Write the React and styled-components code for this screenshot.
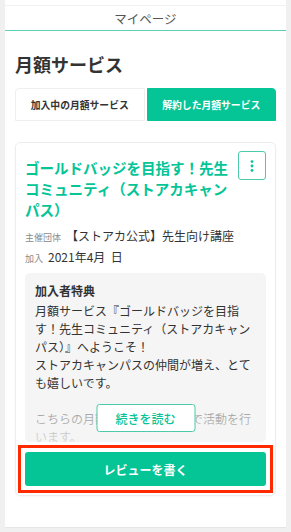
import { createGlobalStyle, styled } from 'styled-components';

const GREEN = '#05c496';

const GlobalStyle = createGlobalStyle`
  body {
    margin: 0;
    background: #f0f0f0;
    font-family: "Noto Sans CJK JP", "Noto Sans", sans-serif;
    color: #333;
  }
`;

function App() {
  return (
    <>
      <GlobalStyle />
      <Page>
        <Panel>
          <Header>マイページ</Header>
          <Content>
            <PageTitle>月額サービス</PageTitle>
            <Tabs>
              <Tab side="left">加入中の月額サービス</Tab>
              <Tab side="right" active>解約した月額サービス</Tab>
            </Tabs>

            <Card>
              <CardHead>
                <CardTitle>ゴールドバッジを目指す！先生コミュニティ（ストアカキャンパス）</CardTitle>
                <MenuButton aria-label="menu">
                  <svg width="4" height="12" viewBox="0 0 4 12">
                    <circle cx="2" cy="1.6" r="1.4" fill={GREEN} />
                    <circle cx="2" cy="6" r="1.4" fill={GREEN} />
                    <circle cx="2" cy="10.4" r="1.4" fill={GREEN} />
                  </svg>
                </MenuButton>
              </CardHead>

              <MetaList>
                <Meta>
                  <MetaLabel>主催団体</MetaLabel>
                  <MetaValue>【ストアカ公式】先生向け講座</MetaValue>
                </Meta>
                <Meta>
                  <MetaLabel>加入</MetaLabel>
                  <MetaValue>2021年4月&nbsp;&nbsp;日</MetaValue>
                </Meta>
              </MetaList>

              <Benefit>
                <BenefitTitle>加入者特典</BenefitTitle>
                <BenefitText>
                  月額サービス『ゴールドバッジを目指<NoBreak>す！</NoBreak>先生コミュニティ（ストアカキャンパス）』へようこそ！
                  {'\n'}ストアカキャンパスの仲間が増え、とても嬉しいです。
                  {'\n\n'}こちらの月額サービス上のみで活動を行います。
                  {'\n'}ぜひご参加ください。
                </BenefitText>
                <Fade />
                <ReadMore>続きを読む</ReadMore>
              </Benefit>

              <ReviewFrame>
                <ReviewButton>レビューを書く</ReviewButton>
              </ReviewFrame>
            </Card>
          </Content>
        </Panel>
      </Page>
    </>
  );
}

const Page = styled.div`
  height: 532px;
  padding: 0 5px;
  box-sizing: border-box;
  background: #f0f0f0;
`;

const Panel = styled.div`
  height: 528px;
  background: #fff;
  border-bottom: 1px solid #e6e6e6;
  box-sizing: border-box;
  padding-top: 5px;
`;

const Header = styled.div`
  height: 26px;
  box-sizing: border-box;
  border-top: 1px solid #f2f2f2;
  border-bottom: 1px solid #5ccfb4;
  display: flex;
  align-items: center;
  justify-content: center;
  font-size: 12.5px;
  color: #555;
`;

const Content = styled.div`
  padding: 0 10px;
`;

const PageTitle = styled.h1`
  margin: 20px 0 11px;
  font-size: 18px;
  line-height: 26px;
  font-weight: 700;
  color: #333;
`;

const Tabs = styled.div`
  display: flex;
  gap: 2px;
`;

const Tab = styled.div`
  flex: 1;
  height: 33px;
  box-sizing: border-box;
  display: flex;
  align-items: center;
  justify-content: center;
  font-size: 9.8px;
  font-weight: 700;
  color: ${(p) => (p.active ? '#fff' : '#333')};
  background: ${(p) => (p.active ? GREEN : '#fff')};
  border: 1px solid ${(p) => (p.active ? GREEN : '#efefef')};
  border-radius: ${(p) => (p.side === 'left' ? '4px 0 0 0' : '0 4px 0 0')};
`;

const Card = styled.div`
  margin-top: 21px;
  border: 1px solid #ededed;
  border-radius: 5px;
  padding: 8px 9px 2px;
  box-shadow: 0 1px 2px rgba(0, 0, 0, 0.03);
`;

const CardHead = styled.div`
  display: flex;
  align-items: flex-start;
  gap: 6px;
`;

const CardTitle = styled.h2`
  flex: 1;
  margin: 6px 0 0;
  font-size: 14.5px;
  line-height: 21px;
  font-weight: 700;
  color: ${GREEN};
`;

const MenuButton = styled.button`
  flex: none;
  width: 28px;
  height: 29px;
  border: 1px solid #4ccaa9;
  border-radius: 3px;
  background: #fff;
  display: flex;
  align-items: center;
  justify-content: center;
  padding: 0;
`;

const MetaList = styled.div`
  margin-top: 6px;
`;

const Meta = styled.div`
  display: flex;
  align-items: baseline;
  gap: 5px;
  line-height: 19px;
`;

const MetaLabel = styled.span`
  font-size: 9px;
  color: #8a8a8a;
`;

const MetaValue = styled.span`
  font-size: 12px;
  color: #333;
`;

const Benefit = styled.div`
  position: relative;
  margin-top: 5px;
  height: 169px;
  overflow: hidden;
  background: #f5f5f5;
  border-radius: 5px;
  padding: 0 10px;
`;

const BenefitTitle = styled.div`
  padding-top: 9px;
  margin-bottom: 2px;
  font-size: 12px;
  line-height: 18px;
  font-weight: 700;
  color: #333;
`;

const BenefitText = styled.div`
  font-size: 12px;
  line-height: 18px;
  color: #333;
  white-space: pre-line;
  line-break: strict;
`;

const NoBreak = styled.span`
  white-space: nowrap;
`;

const Fade = styled.div`
  position: absolute;
  left: 0;
  right: 0;
  bottom: 0;
  height: 44px;
  background: linear-gradient(rgba(245, 245, 245, 0.45), rgba(245, 245, 245, 0.85));
`;

const ReadMore = styled.button`
  position: absolute;
  left: 50%;
  bottom: 10px;
  transform: translateX(-50%);
  width: 99px;
  height: 28px;
  background: #fff;
  border: 1px solid #4ccaa9;
  border-radius: 3px;
  font-family: inherit;
  font-size: 12px;
  font-weight: 500;
  color: ${GREEN};
  padding: 0;
`;

const ReviewFrame = styled.div`
  margin: 3px -7px 0;
  padding: 4px;
  border: 3px solid #ff2a00;
`;

const ReviewButton = styled.button`
  display: block;
  width: 100%;
  height: 34px;
  border: none;
  border-radius: 3px;
  background: ${GREEN};
  color: #fff;
  font-family: inherit;
  font-size: 12px;
  font-weight: 700;
`;

export default App;
